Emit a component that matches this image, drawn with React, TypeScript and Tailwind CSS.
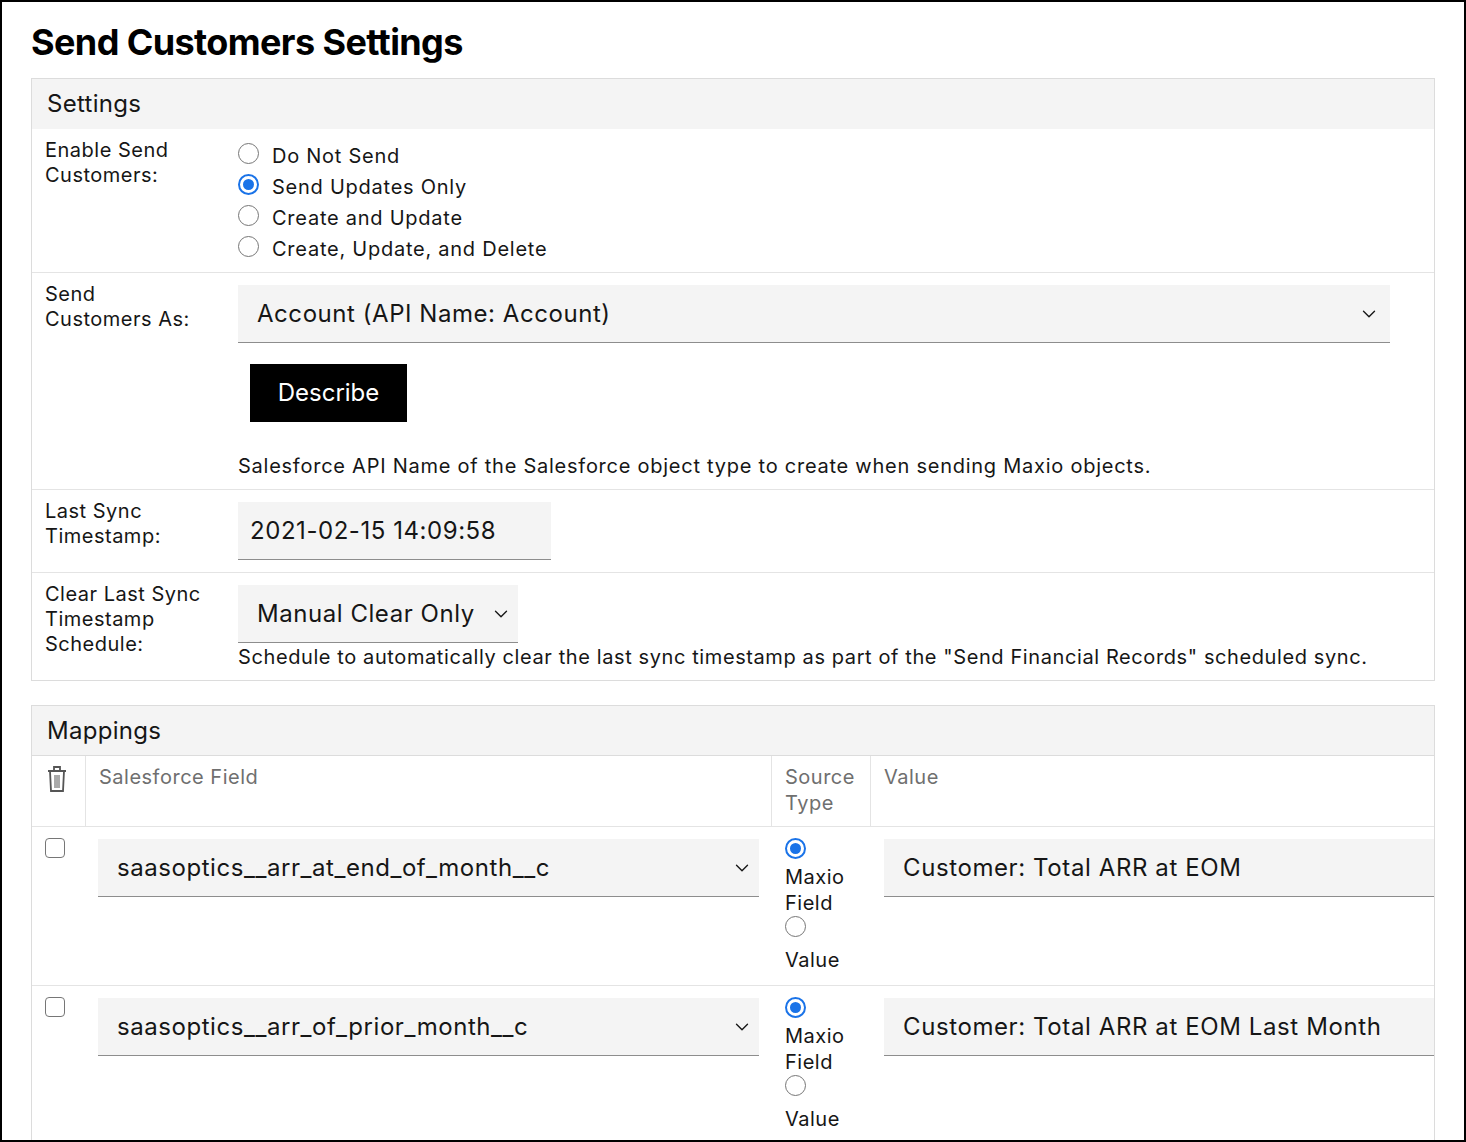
import { ChevronDown } from 'lucide-react';

const font = { fontFamily: 'Inter, "Liberation Sans", sans-serif' };

const Radio = ({ on }: { on?: boolean }) =>
  on ? (
    <span className="inline-flex w-[21px] h-[21px] rounded-full border-2 border-[#1a73e8] items-center justify-center shrink-0">
      <span className="w-[11px] h-[11px] rounded-full bg-[#1a73e8]" />
    </span>
  ) : (
    <span className="inline-block w-[21px] h-[21px] rounded-full border border-[#767676] shrink-0" />
  );

const Checkbox = () => <span className="inline-block w-[20px] h-[20px] rounded-[4px] border border-[#767676]" />;

const Select = ({ text, className }: { text: string; className: string }) => (
  <div className={`flex items-center justify-between bg-[#f4f4f4] border-b border-[#8d8d8d] text-[24px] tracking-[0.55px] text-[#161616] ${className}`}>
    <span>{text}</span>
    <ChevronDown size={22} strokeWidth={1.5} />
  </div>
);

const Trash = () => (
  <svg width="24" height="30" viewBox="0 0 24 30" fill="none" stroke="#555" strokeWidth="1.8">
    <path d="M3 7h18M9 7V3h6v4M5 7l1 20h12l1-20" />
    <path d="M10 11v13M12 11v13M14 11v13" strokeWidth="1" />
  </svg>
);

const Row = ({ label, children, last }: { label: React.ReactNode; children: React.ReactNode; last?: boolean }) => (
  <div className={`flex ${last ? '' : 'border-b border-[#e4e4e4]'}`}>
    <div className="w-[206px] pl-[13px] pt-[9px] text-[20px] leading-[25px] tracking-[0.5px] text-[#161616]">{label}</div>
    <div className="flex-1">{children}</div>
  </div>
);

const MapRow = ({ field, value, h }: { field: string; value: string; h: string }) => (
  <div className={`flex border-t border-[#e4e4e4] ${h}`}>
    <div className="w-[54px] pl-[13px] pt-[11px]">
      <Checkbox />
    </div>
    <div className="w-[686px] pl-[12px] pr-[13px] pt-[12px]">
      <Select text={field} className="h-[58px] pl-[19px] pr-[6px]" />
    </div>
    <div className="w-[99px] pl-[13px] pt-[7px] text-[20px] leading-[26px] tracking-[0.5px] text-[#161616]">
      <Radio on />
      <div className="mt-[4px]">Maxio</div>
      <div>Field</div>
      <Radio />
      <div className="mt-[4px]">Value</div>
    </div>
    <div className="flex-1 pl-[13px] pt-[12px]">
      <div className="h-[58px] bg-[#f4f4f4] border-b border-[#8d8d8d] flex items-center pl-[19px] text-[24px] tracking-[0.6px] text-[#161616]">{value}</div>
    </div>
  </div>
);

export default function App() {
  return (
    <div style={font} className="w-[1466px] h-[1142px] border-2 border-black bg-white overflow-hidden pl-[29px] pr-[29px]">
      <h1 className="text-[36px] font-bold text-black leading-[44px] mt-[18px] mb-[14px] tracking-[-0.6px]">Send Customers Settings</h1>
      <div className="border border-[#dcdcdc]">
        <div className="bg-[#f4f4f4] h-[50px] flex items-center pl-[15px] text-[24px] tracking-[0.3px] text-[#161616]">Settings</div>
        <Row label={<>Enable Send<br />Customers:</>}>
          <div className="pt-[9px] pb-[10px] text-[20px] tracking-[0.75px] text-[#161616]">
            {['Do Not Send', 'Send Updates Only', 'Create and Update', 'Create, Update, and Delete'].map((t, i) => (
              <div key={t} className="flex items-center gap-[13px] h-[31px]">
                <Radio on={i === 1} />
                <span className="mt-[4px]">{t}</span>
              </div>
            ))}
          </div>
        </Row>
        <Row label={<>Send<br />Customers As:</>}>
          <div className="pt-[12px] pb-[8px]">
            <Select text="Account (API Name: Account)" className="w-[1152px] h-[58px] pl-[19px] pr-[10px]" />
            <button className="ml-[12px] mt-[21px] w-[157px] h-[58px] bg-black text-white text-[24px]">Describe</button>
            <div className="mt-[29px] text-[20px] tracking-[0.75px] text-[#161616]">Salesforce API Name of the Salesforce object type to create when sending Maxio objects.</div>
          </div>
        </Row>
        <Row label={<>Last Sync<br />Timestamp:</>}>
          <div className="pt-[12px] pb-[12px]">
            <div className="w-[313px] h-[58px] bg-[#f4f4f4] border-b border-[#8d8d8d] flex items-center pl-[12px] text-[24px] tracking-[0.55px] text-[#161616]">2021-02-15 14:09:58</div>
          </div>
        </Row>
        <Row last label={<>Clear Last Sync<br />Timestamp<br />Schedule:</>}>
          <div className="pt-[12px] pb-[9px]">
            <Select text="Manual Clear Only" className="w-[280px] h-[58px] pl-[19px] pr-[6px]" />
            <div className="text-[20px] tracking-[0.6px] text-[#161616] leading-[28px]">Schedule to automatically clear the last sync timestamp as part of the "Send Financial Records" scheduled sync.</div>
          </div>
        </Row>
      </div>
      <div className="border border-[#dcdcdc] border-b-0 mt-[24px]">
        <div className="bg-[#f4f4f4] h-[50px] flex items-center pl-[15px] text-[24px] tracking-[0.3px] text-[#161616] border-b border-[#dcdcdc]">Mappings</div>
        <div className="flex h-[70px] text-[20px] tracking-[0.5px] text-[#6f6f6f] leading-[26px]">
          <div className="w-[54px] pl-[13px] pt-[8px] border-r border-[#e4e4e4]"><Trash /></div>
          <div className="w-[686px] pl-[13px] pt-[8px] border-r border-[#e4e4e4]">Salesforce Field</div>
          <div className="w-[99px] pl-[13px] pt-[8px] border-r border-[#e4e4e4]">Source<br />Type</div>
          <div className="flex-1 pl-[13px] pt-[8px]">Value</div>
        </div>
        <MapRow field="saasoptics__arr_at_end_of_month__c" value="Customer: Total ARR at EOM" h="h-[159px]" />
        <MapRow field="saasoptics__arr_of_prior_month__c" value="Customer: Total ARR at EOM Last Month" h="h-[159px]" />
      </div>
    </div>
  );
}
